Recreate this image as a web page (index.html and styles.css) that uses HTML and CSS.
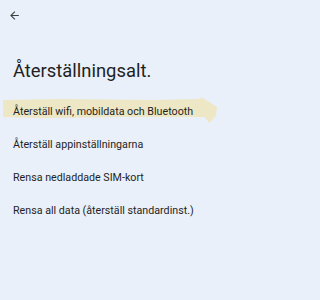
FILE: index.html
```html
<!DOCTYPE html>
<html lang="sv">
<head>
<meta charset="utf-8">
<link rel="stylesheet" href="styles.css">
</head>
<body>
<div class="screen">
  <div class="topbar">
    <svg class="back" width="13" height="13" viewBox="0 0 24 24"><path d="M20 11H7.83l5.59-5.59L12 4l-8 8 8 8 1.41-1.41L7.83 13H20v-2z" fill="#3c4043"/></svg>
  </div>
  <h1 class="title">Återställningsalt.</h1>
  <ul class="list">
    <li class="item item-hl"><span>Återställ wifi, mobildata och Bluetooth</span></li>
    <li class="item"><span>Återställ appinställningarna</span></li>
    <li class="item"><span>Rensa nedladdade SIM-kort</span></li>
    <li class="item"><span>Rensa all data (återställ standardinst.)</span></li>
  </ul>
</div>
</body>
</html>
```
FILE: styles.css
```css
html, body {
  margin: 0;
  padding: 0;
  background: #e9f0f9;
}
.screen {
  width: 218px;
  height: 300px;
  font-family: Roboto, "Noto Sans", sans-serif;
  color: #1f1f1f;
}
.topbar {
  height: 30px;
  padding: 9px 0 0 8px;
  box-sizing: border-box;
}
.back {
  display: block;
}
.title {
  margin: 30px 0 0 13px;
  font-size: 18.4px;
  font-weight: 400;
  line-height: 22px;
  letter-spacing: 0;
}
.list {
  list-style: none;
  margin: 13px 0 0 0;
  padding: 0;
}
.item {
  position: relative;
  height: 33px;
  display: flex;
  align-items: center;
  padding-left: 13px;
  font-size: 10.7px;
}
.item span {
  position: relative;
}
.item-hl::before {
  content: "";
  position: absolute;
  left: 3px;
  width: 214px;
  top: 2px;
  height: 27px;
  background: #ede7c5;
  clip-path: polygon(0 3px, 60px 2px, 150px 3px, 197px 2px, 198px 0, 214px 10px, 213px 19px, 206px 26px, 202px 20px, 120px 20px, 40px 21px, 0 20px);
}
```
